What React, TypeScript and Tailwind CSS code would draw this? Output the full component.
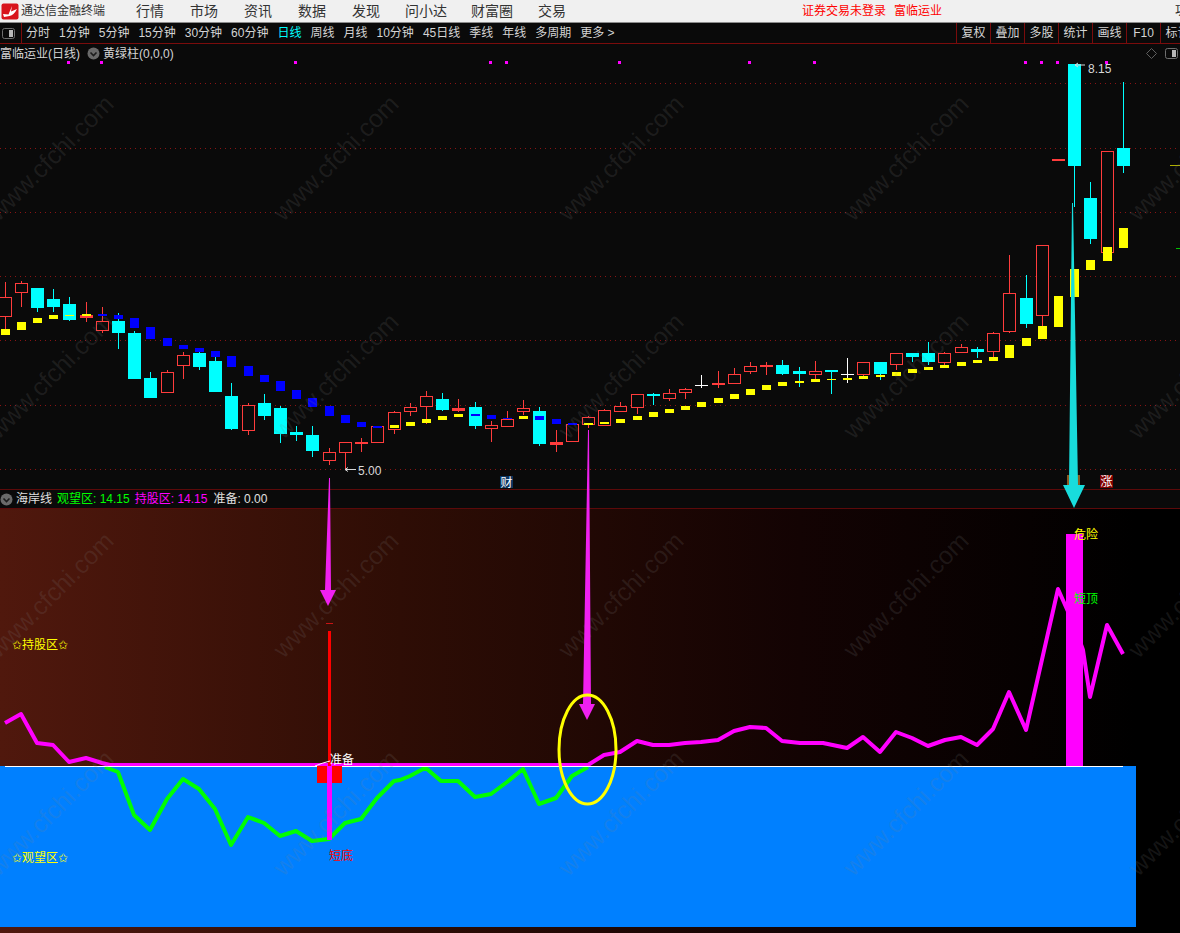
type Candle = [number, number, number, number, string, number, number, string];

// high, top, bottom, low, type, ma top, ma bottom, ma colour (y values are page pixels)
const candles: Candle[] = [
  [282, 297, 317, 329, "r", 329, 335, "y"],
  [281, 283, 293, 307, "r", 322, 330, "y"],
  [288, 288, 308, 312, "c", 318, 323, "y"],
  [289, 299, 307, 312, "c", 315, 319, "y"],
  [297, 304, 320, 321, "c", 315, 316, "y"],
  [302, 315, 318, 322, "r", 314, 316, "y"],
  [307, 321, 331, 333, "r", 314, 316, "b"],
  [313, 321, 333, 349, "c", 315, 319, "b"],
  [331, 333, 379, 379, "c", 318, 328, "b"],
  [372, 378, 398, 398, "c", 327, 339, "b"],
  [370, 372, 393, 393, "r", 338, 346, "b"],
  [352, 355, 366, 379, "r", 345, 349, "b"],
  [352, 353, 367, 370, "c", 348, 352, "b"],
  [357, 361, 392, 392, "c", 351, 357, "b"],
  [383, 396, 429, 430, "c", 356, 367, "b"],
  [403, 405, 431, 435, "r", 366, 376, "b"],
  [394, 403, 416, 420, "c", 375, 382, "b"],
  [406, 408, 434, 443, "c", 381, 391, "b"],
  [426, 432, 435, 441, "c", 390, 399, "b"],
  [426, 435, 451, 457, "c", 398, 407, "b"],
  [448, 452, 461, 465, "r", 406, 416, "b"],
  [442, 442, 453, 470, "r", 415, 423, "b"],
  [438, 442, 444, 452, "r", 422, 427, "b"],
  [426, 426, 443, 443, "r", 426, 428, "b"],
  [411, 412, 430, 434, "r", 425, 428, "y"],
  [403, 407, 412, 416, "r", 422, 426, "y"],
  [391, 396, 407, 424, "r", 419, 423, "y"],
  [393, 399, 410, 411, "c", 416, 420, "y"],
  [399, 408, 411, 412, "r", 414, 417, "y"],
  [402, 407, 426, 429, "c", 414, 416, "b"],
  [421, 425, 429, 442, "r", 415, 419, "b"],
  [411, 419, 427, 427, "r", 418, 419, "b"],
  [400, 408, 412, 415, "r", 416, 419, "y"],
  [407, 411, 444, 446, "c", 416, 420, "b"],
  [430, 442, 445, 452, "r", 419, 424, "b"],
  [424, 424, 442, 442, "r", 423, 425, "b"],
  [416, 417, 425, 428, "r", 423, 425, "y"],
  [409, 410, 426, 426, "r", 422, 424, "y"],
  [402, 406, 412, 412, "r", 419, 423, "y"],
  [394, 394, 408, 414, "r", 416, 420, "y"],
  [393, 394, 396, 405, "c", 412, 417, "y"],
  [389, 393, 399, 401, "r", 409, 413, "y"],
  [388, 389, 393, 399, "r", 406, 410, "y"],
  [375, 385, 386, 388, "w", 402, 407, "y"],
  [371, 383, 385, 388, "r", 398, 403, "y"],
  [368, 374, 384, 384, "r", 394, 399, "y"],
  [362, 366, 372, 374, "r", 389, 395, "y"],
  [362, 365, 367, 375, "r", 385, 390, "y"],
  [360, 365, 374, 375, "c", 382, 386, "y"],
  [367, 371, 374, 387, "c", 381, 383, "y"],
  [361, 371, 375, 382, "r", 379, 382, "y"],
  [370, 370, 372, 394, "c", 379, 380, "y"],
  [358, 374, 375, 383, "w", 378, 380, "y"],
  [362, 362, 375, 379, "r", 376, 379, "y"],
  [362, 362, 374, 380, "c", 375, 377, "y"],
  [353, 353, 365, 370, "r", 372, 376, "y"],
  [353, 353, 357, 362, "c", 369, 373, "y"],
  [342, 353, 362, 365, "c", 367, 370, "y"],
  [352, 353, 363, 368, "r", 365, 368, "y"],
  [344, 347, 353, 353, "r", 362, 366, "y"],
  [347, 349, 352, 358, "c", 360, 363, "y"],
  [332, 333, 352, 360, "r", 357, 361, "y"],
  [255, 293, 332, 333, "r", 345, 358, "y"],
  [275, 298, 324, 328, "c", 338, 346, "y"],
  [245, 245, 316, 327, "r", 326, 339, "y"],
  [159, 159, 161, 161, "r", 296, 327, "y"],
  [64, 64, 166, 207, "c", 269, 297, "y"],
  [182, 198, 239, 244, "c", 260, 270, "y"],
  [151, 151, 253, 253, "r", 247, 261, "y"],
  [82, 148, 166, 173, "c", 228, 248, "y"],
];

const candleXs = [
  5, 21, 37, 53, 69, 86, 102, 118, 134, 150, 167, 183, 199, 215, 231, 248, 264, 280, 296, 312, 329, 345, 361, 377, 394,
  410, 426, 442, 458, 475, 491, 507, 523, 539, 556, 572, 588, 604, 620, 637, 653, 669, 685, 701, 718, 734, 750, 766, 782,
  799, 815, 831, 847, 863, 880, 896, 912, 928, 944, 961, 977, 993, 1009, 1026, 1042, 1058, 1074, 1090, 1107, 1123,
];

const colors: Record<string, string> = { r: "#ff3c3c", c: "#00ffff", w: "#ffffff", y: "#ffff00", b: "#0000ff" };

const purpleDots = [68, 101, 295, 490, 506, 619, 749, 814, 1025, 1041, 1057, 1106];
const gridYs = [83, 148, 212, 276, 340, 405, 469];

const magentaLine =
  "5,723 21,714 37,743 53,745 69,762 86,758 102,763 110,765 588,765 604,755 620,752 637,741 653,745 669,745 685,743 701,742 718,740 734,731 750,727 766,728 782,741 800,743 823,743 847,748 863,737 880,752 896,732 912,738 928,746 945,740 961,737 977,745 993,729 1009,692 1026,730 1058,589 1074,625 1083,650 1090,697 1107,625 1123,654";
const greenLine =
  "105,767 118,772 134,815 150,830 167,799 183,779 199,789 215,809 231,845 248,817 264,823 280,836 296,831 312,841 329,839 345,823 361,819 377,798 394,781 400,780 410,776 423,769 427,769 441,781 458,781 475,797 491,794 507,782 523,769 539,804 556,798 572,776 588,767";

const tabs = ["分时", "1分钟", "5分钟", "15分钟", "30分钟", "60分钟", "日线", "周线", "月线", "10分钟", "45日线", "季线", "年线", "多周期"];
const rightTabs = ["复权", "叠加", "多股", "统计", "画线", "F10", "标记"];

const watermarkXs = [51, 336, 621, 906, 1191];
const watermarkYs = [158, 376, 595, 813];

const ChevronDot = () => (
  <svg width="13" height="13" viewBox="0 0 13 13" className="shrink-0">
    <circle cx="6.5" cy="6.5" r="6" fill="#6a6a6a" />
    <path d="M3.5 5.5 L6.5 8.5 L9.5 5.5" fill="none" stroke="#1c1c1c" strokeWidth="1.6" />
  </svg>
);

const PanelIcon = () => (
  <svg width="13" height="11" viewBox="0 0 13 11">
    <rect x="0.5" y="0.5" width="12" height="10" rx="2" fill="none" stroke="#6e6e6e" />
    <rect x="7" y="2" width="4" height="7" fill="#b8b8b8" />
  </svg>
);

const CandleChart = () => (
  <svg className="absolute left-0 top-0" width="1180" height="445" viewBox="0 44 1180 445" shapeRendering="crispEdges">
    {gridYs.map((y) => (
      <line key={y} x1="0" x2="1180" y1={y + 0.5} y2={y + 0.5} stroke="#8a1414" strokeDasharray="1 4" />
    ))}
    {purpleDots.map((x) => (
      <rect key={x} x={x - 1} y="61" width="3" height="3" fill="#ff00ff" />
    ))}
    {candles.map(([high, top, bot, low, type], i) => {
      const x = candleXs[i];
      const c = colors[type];
      const solid = type !== "r" || bot - top <= 3;
      return (
        <g key={i}>
          <rect x={x} y={high} width="1" height={Math.max(top - high, 0)} fill={c} />
          <rect x={x} y={bot} width="1" height={Math.max(low - bot, 0)} fill={c} />
          {solid ? (
            <rect x={x - 6} y={top} width="13" height={bot - top} fill={c} />
          ) : (
            <rect x={x - 5.5} y={top + 0.5} width="12" height={bot - top - 1} fill="#0a0a0a" stroke={c} />
          )}
        </g>
      );
    })}
    {candles.map(([, , , , , maTop, maBot, ma], i) => (
      <rect key={i} x={candleXs[i] - 4} y={maTop} width="9" height={maBot - maTop} fill={colors[ma]} />
    ))}
    <rect x="1170" y="165" width="10" height="1" fill="#b0b000" />
    <rect x="1176" y="248" width="4" height="1" fill="#00c000" />
    <path d="M1075 65 l3 -2 m-3 2 l3 2 m-3 -2 h10" stroke="#d8d8d8" fill="none" shapeRendering="auto" />
    <text x="1088" y="73" fontSize="12" fill="#d8d8d8">8.15</text>
    <path d="M345 469.5 l3 -2 m-3 2 l3 2 m-3 -2 h11" stroke="#d8d8d8" fill="none" shapeRendering="auto" />
    <text x="358" y="475" fontSize="12" fill="#d8d8d8">5.00</text>
    <rect x="500" y="476" width="13" height="12" fill="#0b3560" />
    <text x="500.5" y="486.5" fontSize="12" fill="#ffffff">财</text>
    <rect x="1067" y="475" width="13" height="13" fill="#8a5a20" />
    <rect x="1100" y="475" width="13" height="13" fill="#800000" />
    <text x="1100.5" y="486" fontSize="12" fill="#ffffff">涨</text>
  </svg>
);

const IndicatorChart = () => (
  <svg className="absolute left-0 top-0" width="1180" height="424" viewBox="0 509 1180 424">
    <polyline points={greenLine} fill="none" stroke="#00ff00" strokeWidth="4" strokeLinejoin="round" />
    <polyline points={magentaLine} fill="none" stroke="#ff00ff" strokeWidth="4" strokeLinejoin="round" />
    <rect x="5" y="766" width="1118" height="1" fill="#ffffff" shapeRendering="crispEdges" />
    <g shapeRendering="crispEdges">
      <rect x="328" y="631" width="3" height="135" fill="#ff0000" />
      <rect x="326" y="623" width="7" height="1" fill="#c81414" />
      <rect x="317" y="766" width="25" height="17" fill="#ff0000" />
      <rect x="327" y="766" width="5" height="74" fill="#ff00ff" />
      <rect x="1066" y="534" width="17" height="232" fill="#ff00ff" />
    </g>
    <path d="M315 766 Q322 763 330 761" stroke="#ffffff" fill="none" />
    <text x="330" y="764" fontSize="12" fill="#ffffff">准备</text>
    <text x="329" y="860" fontSize="12" fill="#ff0000">短底</text>
    <text x="1074" y="539" fontSize="12" fill="#ffff00">危险</text>
    <text x="1074" y="603" fontSize="12" fill="#00ff00">短顶</text>
    <text x="12" y="649" fontSize="12" fill="#ffff00">✩持股区✩</text>
    <text x="12" y="862" fontSize="12" fill="#ffff00">✩观望区✩</text>
  </svg>
);

const App = () => {
  return (
    <div className="relative flex h-[933px] w-[1180px] flex-col overflow-hidden whitespace-nowrap bg-[#0a0a0a] font-['Liberation_Sans','Noto_Sans_CJK_SC','DejaVu_Sans',sans-serif] text-xs">
      {/* title bar */}
      <div className="flex h-[23px] shrink-0 items-center border-b border-[#8c8c8c] bg-[#f0f0f0] text-[#333]">
        <svg width="18" height="17" viewBox="0 0 18 17" className="ml-[1px] shrink-0">
          <rect x="0.5" y="0.5" width="17" height="16" rx="2" fill="#d8141c" />
          <path d="M2 11 L7.5 11.5 L11 3 L10 8.5 L16 6 Q13 12 8.5 13 L3 14 Z" fill="#ffffff" />
        </svg>
        <span className="ml-[2px] w-[115px] shrink-0">通达信金融终端</span>
        <div className="flex shrink-0 gap-[26px] text-sm">
          <span>行情</span>
          <span>市场</span>
          <span>资讯</span>
          <span>数据</span>
          <span>发现</span>
          <span className="-ml-px">问小达</span>
          <span className="-ml-[2px]">财富圈</span>
          <span className="-ml-px">交易</span>
        </div>
        <div className="ml-[236px] flex shrink-0 gap-2 text-[#ff0000]">
          <span>证券交易未登录</span>
          <span>富临运业</span>
        </div>
        <span className="ml-[233px] text-[#222]">功</span>
      </div>

      {/* period toolbar */}
      <div className="flex h-[21px] shrink-0 items-stretch border-b border-[#7a0c0c] text-[#d4d4d4]">
        <div className="flex w-[22px] shrink-0 items-center border-r border-[#7a0c0c] pl-[2px]">
          <PanelIcon />
        </div>
        <div className="flex items-center gap-[9px] pl-[4px]">
          {tabs.map((t) => (
            <span key={t} className={t === "日线" ? "text-[#00ffff]" : ""}>
              {t}
            </span>
          ))}
          <span>更多 &gt;</span>
        </div>
        <div className="absolute left-[956px] flex h-[20px]">
          {rightTabs.map((t) => (
            <span key={t} className="flex w-[34px] shrink-0 items-center justify-center border-l border-[#7a0c0c]">
              {t}
            </span>
          ))}
        </div>
      </div>

      {/* candle chart */}
      <div className="relative h-[445px] shrink-0">
        <CandleChart />
        <div className="relative flex h-[19px] items-center text-[#d4d4d4]">
          <span>富临运业(日线)</span>
          <span className="ml-[7px] mr-[3px] flex">
            <ChevronDot />
          </span>
          <span>黄绿柱(0,0,0)</span>
          <div className="absolute right-[2px] top-[4px] flex items-center gap-[8px]">
            <svg width="11" height="11" viewBox="0 0 11 11">
              <path d="M5.5 0.5 L10.5 5.5 L5.5 10.5 L0.5 5.5 Z" fill="none" stroke="#5e5e5e" />
            </svg>
            <PanelIcon />
          </div>
        </div>
      </div>

      {/* indicator header */}
      <div className="flex h-[20px] shrink-0 items-center gap-[4px] border-y border-[#5c0a0a] text-[#e0e0e0]">
        <ChevronDot />
        <span className="ml-[-1px]">海岸线</span>
        <span className="ml-[1px] text-[#00ff00]">观望区: 14.15</span>
        <span className="ml-[1px] text-[#ff00ff]">持股区: 14.15</span>
        <span className="ml-[2px]">准备: 0.00</span>
      </div>

      {/* indicator panel */}
      <div className="relative flex-1 bg-[linear-gradient(90deg,#50180d_0px,#2e0d05_400px,#130303_800px,#000000_1136px)]">
        <div className="mt-[257px] h-[161px] w-[1136px] bg-[#0080ff]" />
        <IndicatorChart />
      </div>

      {/* site watermark */}
      {watermarkYs.map((y) =>
        watermarkXs.map((x) => (
          <span
            key={`${x}-${y}`}
            className="pointer-events-none absolute -translate-x-1/2 -translate-y-1/2 -rotate-45 text-[25px] text-[rgba(130,130,130,0.16)]"
            style={{ left: x, top: y }}
          >
            www.cfchi.com
          </span>
        ))
      )}

      {/* hand drawn arrows on top of the page */}
      <svg className="pointer-events-none absolute left-0 top-0" width="1180" height="933" viewBox="0 0 1180 933">
        <polygon points="329,478 330,478 331,590 336,590 328,606 320,590 325,590" fill="#f020f0" />
        <polygon points="588,430 589,430 591,704 595,704 587,720 579,704 583,704" fill="#f020f0" />
        <polygon points="1072,203 1073,203 1078,485 1085,485 1074,508 1063,485 1069,485" fill="#18dcdc" />
        <ellipse cx="587.5" cy="749.5" rx="28.5" ry="54.5" fill="none" stroke="#ffff00" strokeWidth="3" />
      </svg>
    </div>
  );
};

export default App;
